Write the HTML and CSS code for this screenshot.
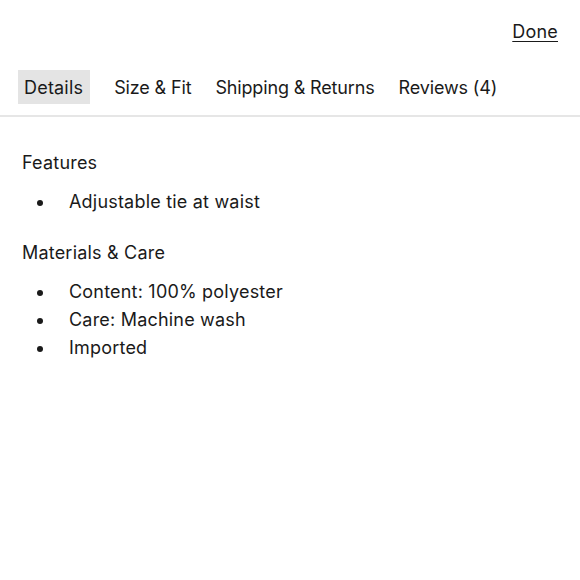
FILE: index.html
```html
<!DOCTYPE html>
<html>
<head>
<meta charset="utf-8">
<link rel="stylesheet" href="styles.css">
</head>
<body>
<div class="top">
  <a class="done" href="#">Done</a>
</div>
<nav class="tabs">
  <span class="tab active">Details</span>
  <span class="tab">Size &amp; Fit</span>
  <span class="tab">Shipping &amp; Returns</span>
  <span class="tab">Reviews (4)</span>
</nav>
<main class="content">
  <h2 class="heading">Features</h2>
  <ul class="list">
    <li>Adjustable tie at waist</li>
  </ul>
  <h2 class="heading">Materials &amp; Care</h2>
  <ul class="list">
    <li>Content: 100% polyester</li>
    <li>Care: Machine wash</li>
    <li>Imported</li>
  </ul>
</main>
</body>
</html>
```
FILE: styles.css
```css
* { box-sizing: border-box; }
body {
  margin: 0;
  background: #fff;
  color: #1a1a1a;
  font-family: "Inter", "DejaVu Sans", sans-serif;
  font-size: 18px;
  letter-spacing: 0.2px;
}
.top {
  display: flex;
  justify-content: flex-end;
  padding: 19px 22px 0 0;
  height: 70px;
}
.done {
  color: #1a1a1a;
  text-decoration: underline;
  text-underline-offset: 3px;
  line-height: 26px;
}
.tabs {
  display: flex;
  gap: 12px;
  padding: 0 0 11px 18px;
  border-bottom: 2px solid #e6e6e6;
}
.tab {
  padding: 1px 6px 0;
  height: 34px;
  line-height: 33px;
  letter-spacing: -0.15px;
}
.tab.active {
  background: #e4e4e4;
  padding: 1px 7px 0 6px;
  margin-right: 6px;
  letter-spacing: 0.2px;
}
.content { padding: 32px 22px 0; }
.heading {
  margin: 0;
  font-size: 18px;
  font-weight: 400;
  line-height: 28px;
}
.list {
  list-style: none;
  margin: 11px 0 23px;
  padding: 0 0 0 15px;
}
.list li {
  display: flex;
  align-items: center;
  line-height: 28px;
}
.list li::before {
  content: "";
  width: 6px;
  height: 6px;
  border-radius: 50%;
  background: #1a1a1a;
  margin-right: 26px;
  margin-top: 2px;
  flex: none;
}
```
